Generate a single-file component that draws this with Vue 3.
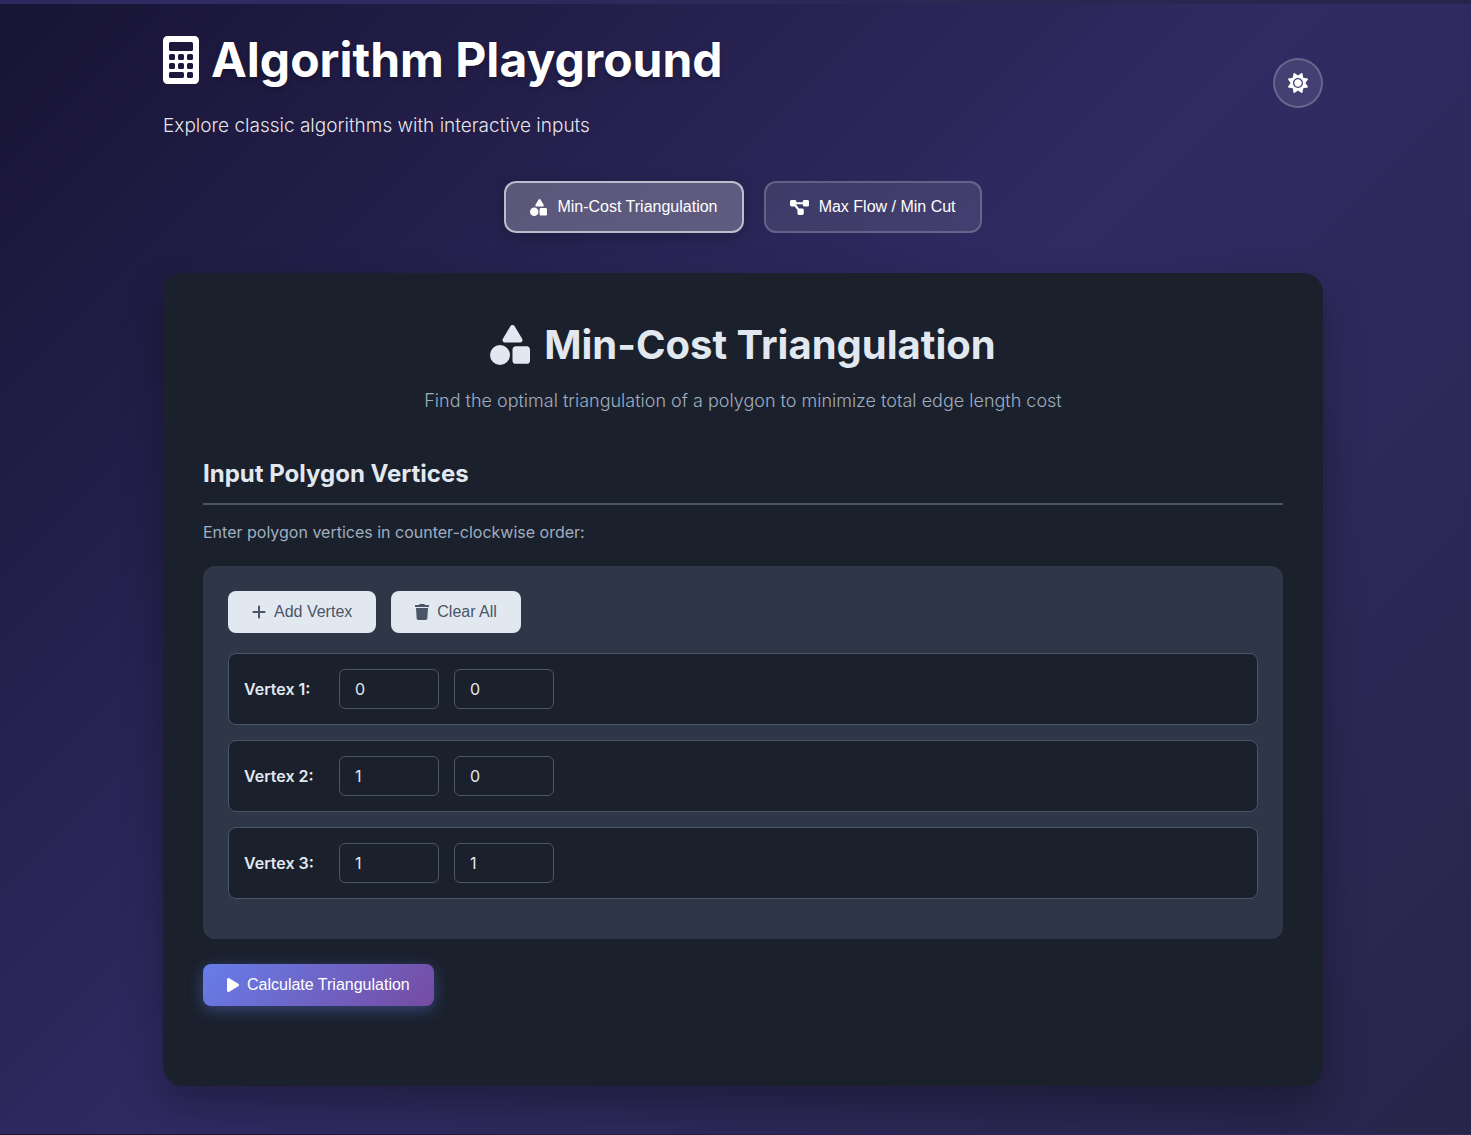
<script setup>
import { ref } from 'vue'

const shapes = {
  box: '0 0 512 512',
  d: 'M315.4 15.5C309.7 5.9 299.2 0 288 0s-21.7 5.9-27.4 15.5l-96 160c-5.9 9.9-6.1 22.2-.4 32.2s16.3 16.2 27.8 16.2H384c11.5 0 22.2-6.2 27.8-16.2s5.5-22.3-.4-32.2l-96-160zM288 312V456c0 22.1 17.9 40 40 40H472c22.1 0 40-17.9 40-40V312c0-22.1-17.9-40-40-40H328c-22.1 0-40 17.9-40 40zM128 512a128 128 0 1 0 0-256 128 128 0 1 0 0 256z',
}
const network = {
  box: '0 0 576 512',
  d: 'M0 80C0 53.5 21.5 32 48 32h96c26.5 0 48 21.5 48 48V96H384V80c0-26.5 21.5-48 48-48h96c26.5 0 48 21.5 48 48v96c0 26.5-21.5 48-48 48H432c-26.5 0-48-21.5-48-48V160H192v16c0 1.7-.1 3.4-.3 5L272 288h96c26.5 0 48 21.5 48 48v96c0 26.5-21.5 48-48 48H272c-26.5 0-48-21.5-48-48V336c0-1.7 .1-3.4 .3-5L144 224H48c-26.5 0-48-21.5-48-48V80z',
}

const tabs = [
  { id: 'triangulation', label: 'Min-Cost Triangulation', icon: shapes },
  { id: 'flow', label: 'Max Flow / Min Cut', icon: network },
]
const activeTab = ref('triangulation')

const vertices = ref([
  { x: '0', y: '0' },
  { x: '1', y: '0' },
  { x: '1', y: '1' },
])

function addVertex() {
  vertices.value.push({ x: '0', y: '0' })
}
function clearAll() {
  vertices.value = []
}
</script>

<template>
  <div class="page">
    <div class="container">
      <header class="header">
        <div>
          <h1 class="title">
            <svg class="icon" viewBox="0 0 384 512" aria-hidden="true">
              <path
                fill-rule="evenodd"
                d="M48 0H336a48 48 0 0 1 48 48V464a48 48 0 0 1-48 48H48a48 48 0 0 1-48-48V48A48 48 0 0 1 48 0zM80 64a16 16 0 0 0-16 16v64a16 16 0 0 0 16 16H304a16 16 0 0 0 16-16V80a16 16 0 0 0-16-16zM80 192a16 16 0 0 0-16 16v32a16 16 0 0 0 16 16h32a16 16 0 0 0 16-16v-32a16 16 0 0 0-16-16zM176 192a16 16 0 0 0-16 16v32a16 16 0 0 0 16 16h32a16 16 0 0 0 16-16v-32a16 16 0 0 0-16-16zM272 192a16 16 0 0 0-16 16v32a16 16 0 0 0 16 16h32a16 16 0 0 0 16-16v-32a16 16 0 0 0-16-16zM80 288a16 16 0 0 0-16 16v32a16 16 0 0 0 16 16h32a16 16 0 0 0 16-16v-32a16 16 0 0 0-16-16zM176 288a16 16 0 0 0-16 16v32a16 16 0 0 0 16 16h32a16 16 0 0 0 16-16v-32a16 16 0 0 0-16-16zM272 288a16 16 0 0 0-16 16v32a16 16 0 0 0 16 16h32a16 16 0 0 0 16-16v-32a16 16 0 0 0-16-16zM80 384a16 16 0 0 0-16 16v32a16 16 0 0 0 16 16H208a16 16 0 0 0 16-16v-32a16 16 0 0 0-16-16zM272 384a16 16 0 0 0-16 16v32a16 16 0 0 0 16 16h32a16 16 0 0 0 16-16v-32a16 16 0 0 0-16-16z"
              />
            </svg>
            <span>Algorithm Playground</span>
          </h1>
          <p class="tagline">Explore classic algorithms with interactive inputs</p>
        </div>
        <button class="theme-toggle" type="button" aria-label="Toggle theme">
          <svg class="icon" viewBox="0 0 512 512" aria-hidden="true">
            <path
              d="M256 159.1c-53.02 0-95.1 42.98-95.1 95.1S202.1 351.1 256 351.1s95.1-42.98 95.1-95.1S309 159.1 256 159.1zM509.3 347L446.1 255.1l63.15-91.01c6.332-9.125 1.104-21.74-9.826-23.72l-109-19.7l-19.7-109c-1.975-10.93-14.59-16.16-23.72-9.824L256 65.89L164.1 2.736c-9.125-6.332-21.74-1.107-23.72 9.824L121.6 121.6L12.56 141.3C1.633 143.2-3.596 155.9 2.736 164.1L65.89 256l-63.15 91.01c-6.332 9.125-1.105 21.74 9.824 23.72l109 19.7l19.7 109c1.975 10.93 14.59 16.16 23.72 9.824L256 446.1l91.01 63.15c9.127 6.334 21.75 1.107 23.72-9.822l19.7-109l109-19.7C510.4 368.8 515.6 356.1 509.3 347zM256 383.1c-70.69 0-127.1-57.31-127.1-127.1c0-70.69 57.31-127.1 127.1-127.1s127.1 57.3 127.1 127.1C383.1 326.7 326.7 383.1 256 383.1z"
            />
          </svg>
        </button>
      </header>

      <nav class="tabs">
        <button
          v-for="tab in tabs"
          :key="tab.id"
          type="button"
          class="tab"
          :class="{ active: tab.id === activeTab }"
          @click="activeTab = tab.id"
        >
          <svg class="icon" :viewBox="tab.icon.box" aria-hidden="true"><path :d="tab.icon.d" /></svg>
          <span>{{ tab.label }}</span>
        </button>
      </nav>

      <main class="panel">
        <div class="intro">
          <h2 class="panel-title">
            <svg class="icon" :viewBox="shapes.box" aria-hidden="true"><path :d="shapes.d" /></svg>
            <span>Min-Cost Triangulation</span>
          </h2>
          <p class="lead">Find the optimal triangulation of a polygon to minimize total edge length cost</p>
        </div>

        <h3 class="section-title">Input Polygon Vertices</h3>
        <p class="hint">Enter polygon vertices in counter-clockwise order:</p>

        <section class="editor">
          <div class="toolbar">
            <button class="btn light" type="button" @click="addVertex">
              <svg class="icon" viewBox="0 0 448 512" aria-hidden="true">
                <path
                  d="M432 256c0 17.69-14.33 32.01-32 32.01H256v144c0 17.69-14.33 31.99-32 31.99s-32-14.3-32-31.99v-144H48c-17.67 0-32-14.32-32-32.01s14.33-31.99 32-31.99H192v-144c0-17.69 14.33-32.01 32-32.01s32 14.32 32 32.01v144h144C417.7 224 432 238.3 432 256z"
                />
              </svg>
              <span>Add Vertex</span>
            </button>
            <button class="btn light" type="button" @click="clearAll">
              <svg class="icon" viewBox="0 0 448 512" aria-hidden="true">
                <path
                  d="M135.2 17.69C140.6 6.848 151.7 0 163.8 0H284.2c12.1 0 23.2 6.848 28.6 17.69L320 32h112a16 16 0 0 1 16 16v32a16 16 0 0 1-16 16H16A16 16 0 0 1 0 80V48a16 16 0 0 1 16-16h112zM32 128H416L394.8 467c-1.6 25.3-22.6 45-47.9 45H101.1c-25.3 0-46.3-19.7-47.9-45z"
                />
              </svg>
              <span>Clear All</span>
            </button>
          </div>

          <div v-for="(vertex, i) in vertices" :key="i" class="row">
            <label class="row-label" :for="`vertex-${i}-x`">Vertex {{ i + 1 }}:</label>
            <input :id="`vertex-${i}-x`" v-model="vertex.x" class="coord" type="text" inputmode="decimal" />
            <input v-model="vertex.y" class="coord" type="text" inputmode="decimal" :aria-label="`Vertex ${i + 1} y`" />
          </div>
        </section>

        <button class="btn primary" type="button">
          <svg class="icon" viewBox="0 0 384 512" aria-hidden="true">
            <path
              d="M361 215C375.3 223.8 384 239.3 384 256C384 272.7 375.3 288.2 361 296.1L73.03 472.1C58.21 482 39.66 482.4 24.52 473.9C9.377 465.4 0 449.4 0 432V80C0 62.64 9.377 46.63 24.52 38.13C39.66 29.64 58.21 29.99 73.03 39.04L361 215z"
            />
          </svg>
          <span>Calculate Triangulation</span>
        </button>
      </main>
    </div>
  </div>
</template>

<style>
body {
  margin: 0;
  background: #302b63;
}
</style>

<style scoped>
* {
  box-sizing: border-box;
}

.page {
  min-height: 100vh;
  padding: 24px 0 48px 15px;
  font-family: Inter, sans-serif;
  font-size: 16px;
  color: #e2e8f0;
  background: linear-gradient(135deg, #181434 0%, #302b63 50%, #28254a 100%) 0 4px / 100% calc(100% - 5px) repeat-y;
}

.container {
  max-width: 1200px;
  margin: 0 auto;
  padding: 0 20px;
}

.icon {
  display: block;
  flex: none;
  width: auto;
  height: 16px;
  fill: currentColor;
}

h1,
h2,
h3,
p {
  margin: 0;
}

.header {
  display: flex;
  align-items: center;
  justify-content: space-between;
  margin-bottom: 40px;
}

.title {
  display: flex;
  align-items: center;
  gap: 12px;
  margin-bottom: 14px;
  font-size: 48px;
  line-height: 72px;
  font-weight: 700;
  color: #fff;
  text-shadow: 0 2px 4px rgba(0, 0, 0, 0.3);
}

.title .icon {
  height: 48px;
}

.tagline {
  font-size: 19px;
  line-height: 31px;
  font-weight: 350;
  color: rgba(255, 255, 255, 0.9);
}

.theme-toggle {
  display: flex;
  align-items: center;
  justify-content: center;
  width: 50px;
  height: 50px;
  padding: 0;
  border: 2px solid rgba(255, 255, 255, 0.2);
  border-radius: 50%;
  background: rgba(255, 255, 255, 0.1);
  color: #fff;
}

.theme-toggle .icon {
  height: 20px;
}

.tabs {
  display: flex;
  justify-content: center;
  gap: 20px;
  margin-bottom: 40px;
}

.tab {
  display: flex;
  align-items: center;
  gap: 10px;
  height: 52px;
  padding: 0 24px;
  border: 2px solid rgba(255, 255, 255, 0.2);
  border-radius: 12px;
  background: rgba(255, 255, 255, 0.1);
  color: #fff;
  font-family: "Liberation Sans", Arial, sans-serif;
  font-size: 16px;
}

.tab .icon {
  height: 17px;
}

.tab.active {
  border-color: rgba(255, 255, 255, 0.6);
  background: rgba(255, 255, 255, 0.25);
  box-shadow: 0 4px 16px rgba(0, 0, 0, 0.2);
}

.panel {
  padding: 40px 40px 80px;
  border-radius: 20px;
  background: #1a202c;
  box-shadow: 0 20px 40px rgba(0, 0, 0, 0.3);
}

.intro {
  margin-bottom: 40px;
  text-align: center;
}

.panel-title {
  display: flex;
  align-items: center;
  justify-content: center;
  gap: 14px;
  margin-bottom: 10px;
  font-size: 40px;
  line-height: 64px;
  font-weight: 700;
}

.panel-title .icon {
  height: 40px;
}

.lead {
  font-size: 18px;
  line-height: 28px;
  font-weight: 350;
  color: #a0aec0;
}

.section-title {
  margin-bottom: 15px;
  padding-bottom: 10px;
  border-bottom: 2px solid #4a5568;
  font-size: 24px;
  line-height: 38px;
  font-weight: 700;
}

.hint {
  margin-bottom: 22px;
  line-height: 24px;
  color: #a0aec0;
}

.editor {
  margin-bottom: 25px;
  padding: 25px 25px 40px;
  border-radius: 12px;
  background: #2d3748;
}

.toolbar {
  display: flex;
  gap: 15px;
  margin-bottom: 20px;
}

.btn {
  display: flex;
  align-items: center;
  gap: 8px;
  height: 42px;
  padding: 0 24px;
  border: 0;
  border-radius: 8px;
  font-family: "Liberation Sans", Arial, sans-serif;
  font-size: 16px;
}

.light {
  background: #e2e8f0;
  color: #4a5568;
}

.primary {
  background: linear-gradient(135deg, #667eea 0%, #764ba2 100%);
  color: #fff;
  box-shadow: 0 4px 15px rgba(102, 126, 234, 0.4);
}

.row {
  display: flex;
  align-items: center;
  gap: 15px;
  padding: 15px;
  border: 1px solid #4a5568;
  border-radius: 8px;
  background: #1a202c;
}

.row + .row {
  margin-top: 15px;
}

.row-label {
  min-width: 80px;
  font-weight: 600;
}

.coord {
  width: 100px;
  height: 40px;
  padding: 0 15px;
  border: 1px solid #4a5568;
  border-radius: 6px;
  background: #1a202c;
  color: #e2e8f0;
  font-family: inherit;
  font-size: 16px;
}
</style>
